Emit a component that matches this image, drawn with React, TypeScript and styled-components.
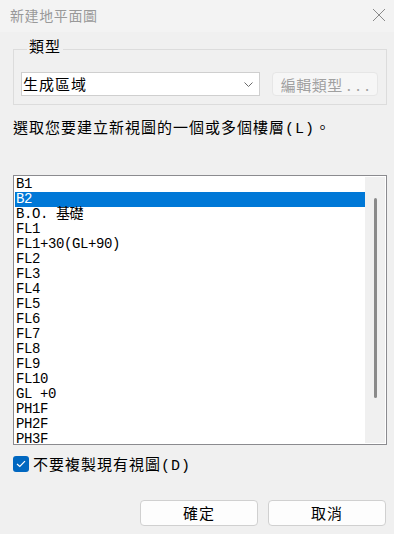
import React from "react";
import styled, { createGlobalStyle } from "styled-components";

const GlobalStyle = createGlobalStyle`
  html, body {
    margin: 0;
    padding: 0;
    background: #f0f0f0;
  }
  * {
    box-sizing: border-box;
  }
`;

const FONT = `"Liberation Mono", "Noto Sans CJK TC", monospace`;

const Window = styled.div`
  width: 394px;
  height: 534px;
  display: flex;
  flex-direction: column;
  background: #f0f0f0;
  font-family: ${FONT};
  color: #000;
  overflow: hidden;
`;

const TitleBar = styled.div`
  height: 32px;
  flex: none;
  display: flex;
  align-items: center;
  justify-content: space-between;
  padding: 0 7px 3px 10px;
  background: #f3f3f3;
`;

const Title = styled.span`
  font-family: "Noto Sans CJK TC", sans-serif;
  font-size: 14px;
  letter-spacing: 0.6px;
  color: #999999;
`;

const CloseButton = styled.div`
  width: 14px;
  height: 14px;
  display: flex;
  align-items: center;
  justify-content: center;
  margin-right: 1px;
`;

const Body = styled.div`
  flex: 1;
  display: flex;
  flex-direction: column;
  padding: 0 7px 0 13px;
`;

const Group = styled.fieldset`
  margin: 9px 0 0;
  padding: 15px 8px 8px 7px;
  border: 1px solid #dcdcdc;
  display: flex;
  gap: 12px;
  min-width: 0;
`;

const Legend = styled.legend`
  padding: 0 2px;
  margin-left: 6px;
  font-size: 15px;
  line-height: 16px;
  letter-spacing: 1px;
`;

const Select = styled.div`
  width: 239px;
  height: 24px;
  background: #fff;
  border: 1px solid #cfcfcf;
  display: flex;
  align-items: center;
  justify-content: space-between;
  padding: 0 6px 0 1px;
  font-size: 15px;
  letter-spacing: 1px;
`;

const EditButton = styled.div`
  width: 106px;
  height: 24px;
  border: 1px solid #e6e6e6;
  border-radius: 4px;
  background: #f6f6f6;
  color: #a0a0a0;
  font-family: "Noto Sans CJK TC", sans-serif;
  font-size: 15px;
  letter-spacing: 0.5px;
  white-space: nowrap;
  display: flex;
  align-items: center;
  justify-content: center;
`;

const Dots = styled.span`
  letter-spacing: 5px;
  margin-left: 4px;
  margin-right: -5px;
`;

const Prompt = styled.div`
  margin-top: 15px;
  height: 20px;
  line-height: 20px;
  font-size: 15px;
  letter-spacing: 1px;
`;

const ListBox = styled.div`
  margin-top: 35px;
  height: 270px;
  border: 1px solid #8b8b8f;
  background: #fff;
  padding: 1px;
  display: flex;
`;

const Items = styled.div`
  flex: 1;
  overflow: hidden;
`;

const Row = styled.div<{ selected?: boolean }>`
  height: 15px;
  line-height: 15px;
  padding-left: 1px;
  font-size: 14px;
  letter-spacing: -0.4px;
  white-space: pre;
  background: ${({ selected }) => (selected ? "#0078d7" : "transparent")};
  color: ${({ selected }) => (selected ? "#fff" : "#000")};
`;

const ScrollTrack = styled.div`
  width: 20px;
  flex: none;
  background: #f0f0f0;
  display: flex;
  justify-content: center;
  padding-top: 21px;
`;

const Thumb = styled.div`
  width: 3px;
  height: 200px;
  border-radius: 2px;
  background: #8a8a8a;
`;

const CheckRow = styled.label`
  margin-top: 11px;
  height: 16px;
  display: flex;
  align-items: center;
  gap: 4px;
  font-size: 15px;
  letter-spacing: 1px;
`;

const CheckBox = styled.span`
  width: 16px;
  height: 16px;
  border-radius: 3px;
  background: #0067c0;
  display: flex;
  align-items: center;
  justify-content: center;
`;

const Footer = styled.div`
  margin-top: 28px;
  display: flex;
  justify-content: flex-end;
  gap: 10px;
  padding-right: 1px;
`;

const Button = styled.div`
  width: 118px;
  height: 26px;
  border: 1px solid #d0d0d0;
  border-radius: 4px;
  background: #fdfdfd;
  display: flex;
  align-items: center;
  justify-content: center;
  font-size: 15px;
  letter-spacing: 1px;
`;

const levels = [
  "B1",
  "B2",
  "B.O. 基礎",
  "FL1",
  "FL1+30(GL+90)",
  "FL2",
  "FL3",
  "FL4",
  "FL5",
  "FL6",
  "FL7",
  "FL8",
  "FL9",
  "FL10",
  "GL +0",
  "PH1F",
  "PH2F",
  "PH3F",
];

export default function App() {
  return (
    <Window>
      <GlobalStyle />
      <TitleBar>
        <Title>新建地平面圖</Title>
        <CloseButton>
          <svg width="14" height="14" viewBox="0 0 14 14">
            <path d="M1 1 L13 13 M13 1 L1 13" stroke="#8a8a8a" strokeWidth="1" />
          </svg>
        </CloseButton>
      </TitleBar>
      <Body>
        <Group>
          <Legend>類型</Legend>
          <Select>
            <span>生成區域</span>
            <svg width="9" height="5" viewBox="0 0 9 5">
              <path d="M0.5 0.5 L4.5 4.5 L8.5 0.5" fill="none" stroke="#6a6a6a" strokeWidth="1" />
            </svg>
          </Select>
          <EditButton>
            編輯類型<Dots>...</Dots>
          </EditButton>
        </Group>
        <Prompt>選取您要建立新視圖的一個或多個樓層(L)。</Prompt>
        <ListBox>
          <Items>
            {levels.map((name) => (
              <Row key={name} selected={name === "B2"}>
                {name}
              </Row>
            ))}
          </Items>
          <ScrollTrack>
            <Thumb />
          </ScrollTrack>
        </ListBox>
        <CheckRow>
          <CheckBox>
            <svg width="10" height="8" viewBox="0 0 10 8">
              <path d="M1 4 L3.8 6.5 L9 1.2" fill="none" stroke="#fff" strokeWidth="1.2" />
            </svg>
          </CheckBox>
          不要複製現有視圖(D)
        </CheckRow>
        <Footer>
          <Button>確定</Button>
          <Button>取消</Button>
        </Footer>
      </Body>
    </Window>
  );
}
